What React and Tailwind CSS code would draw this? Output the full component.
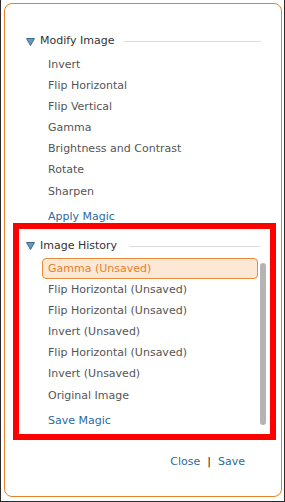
import React from 'react';

const modifyItems = [
  'Invert',
  'Flip Horizontal',
  'Flip Vertical',
  'Gamma',
  'Brightness and Contrast',
  'Rotate',
  'Sharpen',
];

const historyItems = [
  'Flip Horizontal (Unsaved)',
  'Flip Horizontal (Unsaved)',
  'Invert (Unsaved)',
  'Flip Horizontal (Unsaved)',
  'Invert (Unsaved)',
  'Original Image',
];

const Triangle = () => (
  <svg width="9" height="8" viewBox="0 0 9 8" className="shrink-0">
    <path d="M0.5 0.5 H8.5 L4.5 7.5 Z" fill="#6a98bd" stroke="#3d6d91" strokeWidth="1" strokeLinejoin="round" />
  </svg>
);

const SectionHeader = ({ title, lineGap }) => (
  <div className="flex items-center h-[21px]">
    <Triangle />
    <span className="ml-[5px] text-[#333]">{title}</span>
    <div className={`flex-1 h-px bg-[#dcdcdc] ${lineGap}`}></div>
  </div>
);

export default function App() {
  return (
    <div
      className="w-[285px] h-[502px] bg-white border-x border-b border-[#2a2a2a] overflow-hidden"
      style={{ fontFamily: '"DejaVu Sans", Verdana, sans-serif' }}
    >
      <div className="mt-[3px] ml-[3px] w-[278px] h-[494px] border border-[#e5822e] rounded-[8px] text-[11px] flex flex-col">
        {/* Modify Image */}
        <div className="pt-[27px] pl-[21px] pr-[20px]">
          <SectionHeader title="Modify Image" lineGap="ml-[10px]" />
          <ul className="mt-[2px] pl-[22px]">
            {modifyItems.map((item) => (
              <li key={item} className="h-[21.1px] leading-[21px] text-[#555]">
                {item}
              </li>
            ))}
          </ul>
          <div className="mt-[8px] pl-[22px] h-[13px] leading-[14px] text-[#2d6a9b]">Apply Magic</div>
        </div>

        {/* Image History */}
        <div className="ml-[8px] w-[263px] h-[217px] border-[6px] border-[#ff0000] flex flex-col">
          <div className="pt-[7px] pl-[7px] pr-[10px]">
            <SectionHeader title="Image History" lineGap="ml-[12px]" />
          </div>
          <div className="flex pl-[23px] pr-[4px] mt-[1px]">
            <div className="w-[216px]">
              <div className="h-[21px] leading-[19px] border border-[#ec8a3a] rounded-[4px] bg-[#fde8d5] pl-[5px] text-[#e8802c]">
                Gamma (Unsaved)
              </div>
              {historyItems.map((item, i) => (
                <div key={i} className="h-[21.2px] leading-[21px] pl-[6px] text-[#555]">
                  {item}
                </div>
              ))}
              <div className="mt-[8px] h-[14px] leading-[14px] pl-[6px] text-[#2d6a9b]">Save Magic</div>
            </div>
            <div className="ml-[2px] mt-[5px] w-[6px] h-[162px] rounded-full bg-[#b4b4b4]"></div>
          </div>
        </div>

        {/* Footer */}
        <div className="mt-[15px] flex justify-end items-center pr-[36px] h-[16px] text-[#2d6a9b]">
          <span>Close</span>
          <span className="mx-[7px] text-[#222]">|</span>
          <span>Save</span>
        </div>
      </div>
    </div>
  );
}
